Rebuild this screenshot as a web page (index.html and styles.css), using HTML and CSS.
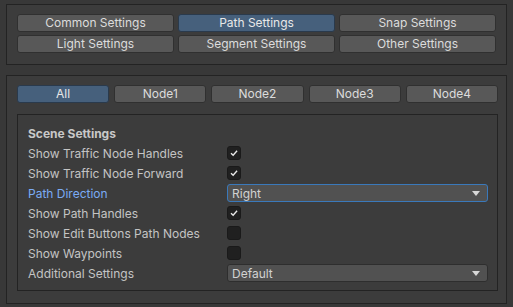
FILE: index.html
```html
<!DOCTYPE html>
<html lang="en">
<head>
    <meta charset="UTF-8">
    <title>Path Settings</title>
    <link rel="stylesheet" href="styles.css">
</head>
<body>
    <section class="panel tabs-panel">
        <div class="tab-grid">
            <button class="btn">Common Settings</button>
            <button class="btn active">Path Settings</button>
            <button class="btn">Snap Settings</button>
            <button class="btn">Light Settings</button>
            <button class="btn">Segment Settings</button>
            <button class="btn">Other Settings</button>
        </div>
    </section>

    <section class="panel nodes-panel">
        <div class="node-row">
            <button class="btn active">All</button>
            <button class="btn">Node1</button>
            <button class="btn">Node2</button>
            <button class="btn">Node3</button>
            <button class="btn">Node4</button>
        </div>

        <div class="settings">
            <div class="row heading">Scene Settings</div>
            <div class="row">
                <span class="label">Show Traffic Node Handles</span>
                <span class="check on"><svg viewBox="0 0 14 14"><path d="M3.5 7.2 L6 9.6 L10.6 4.4"/></svg></span>
            </div>
            <div class="row">
                <span class="label">Show Traffic Node Forward</span>
                <span class="check on"><svg viewBox="0 0 14 14"><path d="M3.5 7.2 L6 9.6 L10.6 4.4"/></svg></span>
            </div>
            <div class="row">
                <span class="label focused">Path Direction</span>
                <span class="select focused">Right<i class="arrow"></i></span>
            </div>
            <div class="row">
                <span class="label">Show Path Handles</span>
                <span class="check on"><svg viewBox="0 0 14 14"><path d="M3.5 7.2 L6 9.6 L10.6 4.4"/></svg></span>
            </div>
            <div class="row">
                <span class="label">Show Edit Buttons Path Nodes</span>
                <span class="check"></span>
            </div>
            <div class="row">
                <span class="label">Show Waypoints</span>
                <span class="check"></span>
            </div>
            <div class="row">
                <span class="label">Additional Settings</span>
                <span class="select">Default<i class="arrow"></i></span>
            </div>
        </div>
    </section>
</body>
</html>
```

FILE: styles.css
```css
body {
    margin: 0;
    padding: 4px 6px 0 6px;
    width: 501px;
    background-color: #383838;
    color: #c4c4c4;
    font-family: Inter, "Noto Sans", sans-serif;
    font-size: 12px;
}

.panel {
    border: 1px solid #232323;
    background-color: #3c3c3c;
}

.tabs-panel {
    padding: 9px 10px 11px 10px;
}

.tab-grid {
    display: grid;
    grid-template-columns: repeat(3, 1fr);
    column-gap: 4px;
    row-gap: 3px;
}

.btn {
    height: 18px;
    padding: 0;
    background-color: #585858;
    color: #dcdcdc;
    border: 1px solid #303030;
    border-radius: 3px;
    font-family: inherit;
    font-size: 12px;
    line-height: 16px;
}

.btn.active {
    background-color: #46607c;
    border-color: #2a3a4c;
    color: #e8e8e8;
}

.nodes-panel {
    margin-top: 10px;
    padding: 9px 8px 12px 10px;
}

.node-row {
    display: grid;
    grid-template-columns: repeat(5, 1fr);
    column-gap: 5px;
}

.settings {
    margin-top: 11px;
    border: 1px solid #232323;
    padding: 8px 9px 7px 10px;
}

.row {
    display: flex;
    align-items: center;
    height: 20px;
}

.heading {
    font-weight: bold;
    color: #c8c8c8;
}

.label {
    width: 199px;
    flex: none;
}

.label.focused {
    color: #7babf4;
}

.check {
    width: 14px;
    height: 14px;
    box-sizing: border-box;
    background-color: #202020;
    border: 1px solid #1a1a1a;
    border-radius: 3px;
}

.check svg {
    display: block;
    width: 12px;
    height: 12px;
    fill: none;
    stroke: #e8e8e8;
    stroke-width: 1.6;
}

.select {
    flex: 1;
    height: 18px;
    box-sizing: border-box;
    display: flex;
    align-items: center;
    padding-left: 4px;
    background-color: #515151;
    border: 1px solid #2e2e2e;
    border-radius: 3px;
    color: #d2d2d2;
}

.select.focused {
    border-color: #3a79bb;
}

.arrow {
    margin-left: auto;
    margin-right: 7px;
    width: 0;
    height: 0;
    border-left: 4px solid transparent;
    border-right: 4px solid transparent;
    border-top: 5px solid #d8d8d8;
}
```
